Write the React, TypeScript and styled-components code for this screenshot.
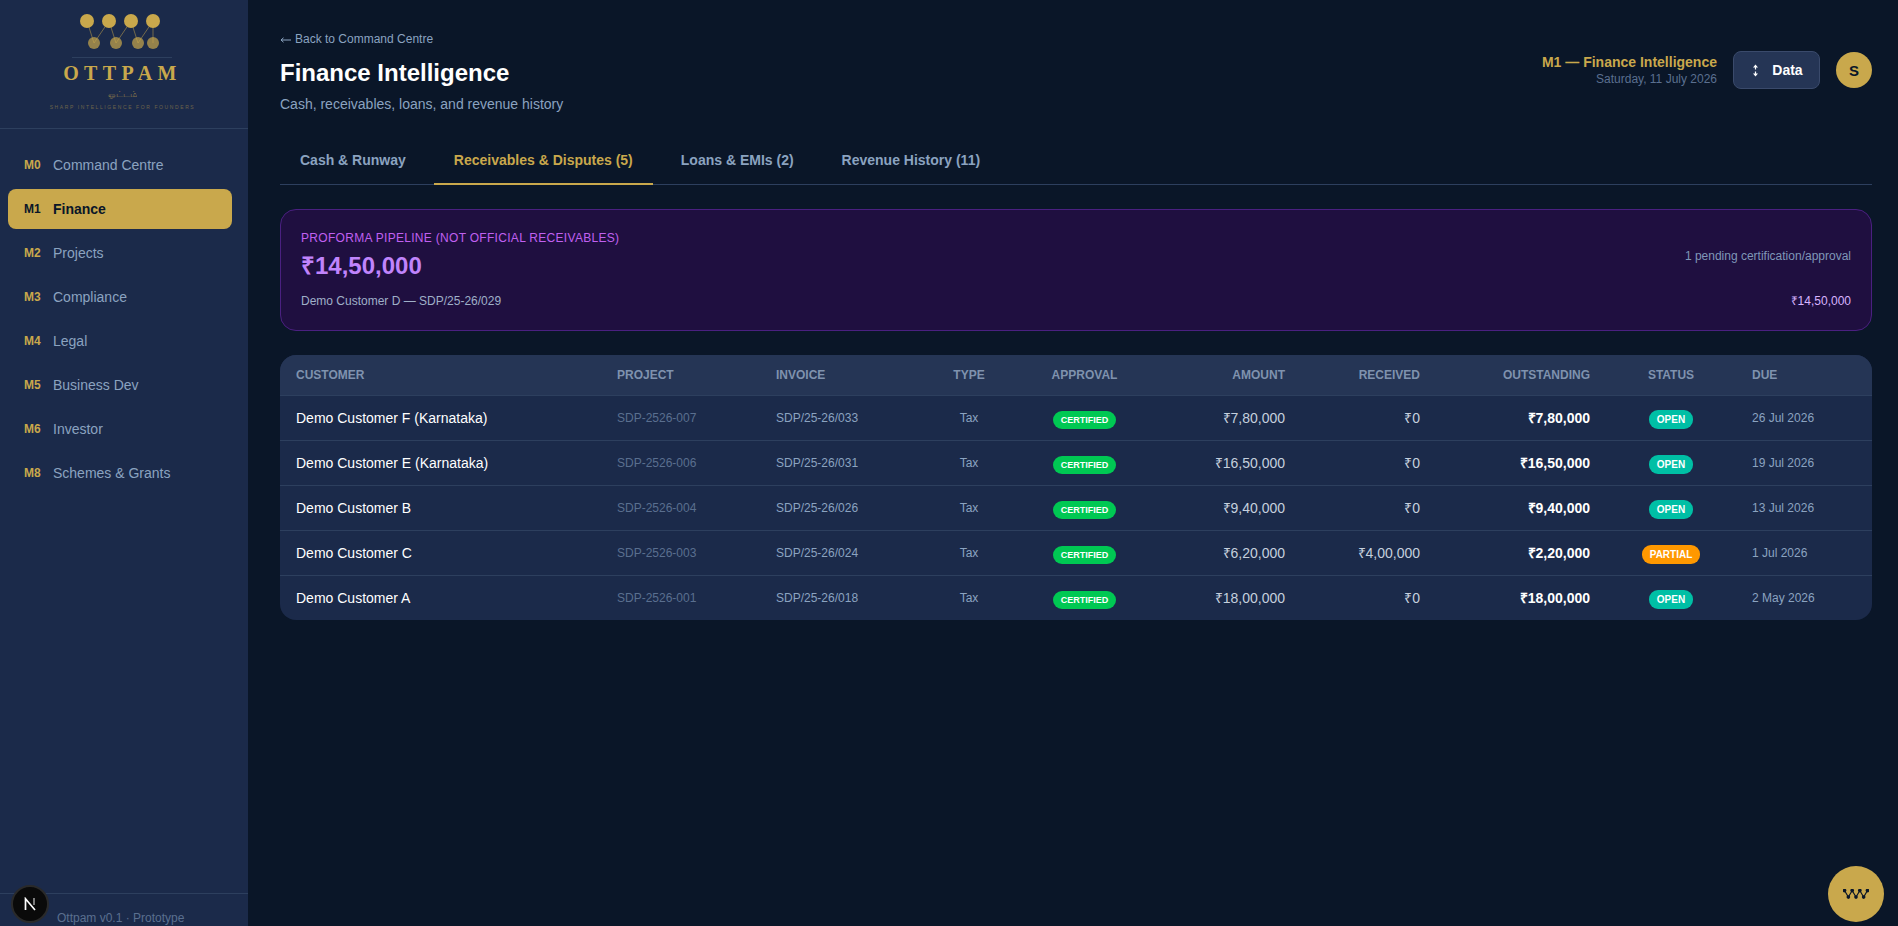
import React, { FC } from "react";
import styled, { createGlobalStyle } from "styled-components";

const GOLD = "#c9a84c";

const GlobalStyle = createGlobalStyle`
    html, body {
        margin: 0;
        height: 100%;
        overflow: hidden;
        background: #0a1628;
        font-family: "Liberation Sans", Arial, sans-serif;
    }
    * {
        box-sizing: border-box;
    }
`

//layout
const Shell = styled.div`
    display: flex;
    height: 926px;
    overflow: hidden;
`
const Sidebar = styled.aside`
    width: 248px;
    flex-shrink: 0;
    display: flex;
    flex-direction: column;
    background: #1b2a4a;
`
const Brand = styled.div`
    height: 129px;
    flex-shrink: 0;
    display: flex;
    flex-direction: column;
    align-items: center;
    padding-top: 13px;
    border-bottom: 1px solid #2d3f5e;
`
const BrandRule = styled.div`
    width: 100px;
    height: 1px;
    margin: 6px 4px 0 0;
    background: #2d3f5e;
`
const BrandName = styled.div`
    margin: 3px 3px 0 0;
    font-family: "Liberation Serif", serif;
    font-size: 20px;
    line-height: 24px;
    font-weight: 700;
    letter-spacing: 5.4px;
    color: ${GOLD};
`
const BrandTamil = styled.div`
    margin: 2px 4px 0 0;
    height: 14px;
    font-size: 9px;
    line-height: 14px;
    color: ${GOLD};
    opacity: 0.6;
`
const BrandTag = styled.div`
    margin: 2px 3px 0 0;
    font-size: 5px;
    line-height: 8px;
    letter-spacing: 1.6px;
    color: ${GOLD};
    opacity: 0.45;
    white-space: nowrap;
`
const Nav = styled.nav`
    flex: 1;
    display: flex;
    flex-direction: column;
    gap: 4px;
    padding: 16px 16px 0 8px;
`
const NavItem = styled.div<{ $active?: boolean }>`
    height: 40px;
    display: flex;
    align-items: center;
    padding-left: 16px;
    border-radius: 8px;
    font-size: 14px;
    font-weight: ${(p) => (p.$active ? 700 : 400)};
    background: ${(p) => (p.$active ? GOLD : "transparent")};
    color: ${(p) => (p.$active ? "#0a1628" : "#8ba3c0")};
`
const NavCode = styled.span<{ $active?: boolean }>`
    width: 29px;
    flex-shrink: 0;
    font-size: 12px;
    font-weight: 700;
    color: ${(p) => (p.$active ? "#0a1628" : GOLD)};
`
const SidebarFooter = styled.div`
    height: 33px;
    flex-shrink: 0;
    padding: 17px 0 0 57px;
    font-size: 12px;
    line-height: 14px;
    color: #5a6f8f;
    border-top: 1px solid #2d3f5e;
    white-space: nowrap;
`
const Main = styled.main`
    flex: 1;
    min-width: 0;
    padding: 31px 26px 0 32px;
`

//header
const Header = styled.header`
    display: flex;
    justify-content: space-between;
    align-items: flex-start;
    height: 85px;
`
const BackLink = styled.div`
    display: flex;
    align-items: center;
    gap: 4px;
    font-size: 12px;
    line-height: 16px;
    color: #8ba3c0;
`
const BackArrow = styled.svg`
    margin-top: 2px;
`
const Title = styled.h1`
    margin: 10px 0 0;
    font-size: 24px;
    line-height: 32px;
    font-weight: 700;
    color: #ffffff;
`
const Subtitle = styled.div`
    margin-top: 6px;
    font-size: 14px;
    line-height: 18px;
    color: #8ba3c0;
`
const HeaderRight = styled.div`
    display: flex;
    align-items: center;
    gap: 16px;
    margin-top: 20px;
`
const Context = styled.div`
    text-align: right;
`
const ContextTitle = styled.div`
    font-size: 14px;
    line-height: 16px;
    font-weight: 700;
    color: ${GOLD};
`
const ContextDate = styled.div`
    margin-top: 2px;
    font-size: 12px;
    line-height: 14px;
    color: #5a6f8f;
`
const DataButton = styled.button`
    width: 87px;
    height: 38px;
    display: flex;
    align-items: center;
    justify-content: center;
    gap: 13px;
    padding: 0 0 0 2px;
    border: 1px solid #3a4a6b;
    border-radius: 8px;
    background: #253555;
    color: #ffffff;
    font: 700 14px "Liberation Sans", Arial, sans-serif;
`
const Avatar = styled.div`
    width: 36px;
    height: 36px;
    display: flex;
    align-items: center;
    justify-content: center;
    border-radius: 50%;
    background: ${GOLD};
    color: #0a1628;
    font-size: 15px;
    font-weight: 700;
`

//tabs
const Tabs = styled.div`
    display: flex;
    gap: 8px;
    height: 49px;
    margin-top: 20px;
    border-bottom: 1px solid #2d3f5e;
`
const Tab = styled.div<{ $active?: boolean }>`
    height: 49px;
    padding: 0 20px;
    display: flex;
    align-items: center;
    font-size: 14px;
    font-weight: 700;
    color: ${(p) => (p.$active ? GOLD : "#8ba3c0")};
    border-bottom: 2px solid ${(p) => (p.$active ? GOLD : "transparent")};
`

//proforma card
const PipelineCard = styled.section`
    height: 122px;
    margin-top: 24px;
    padding: 20px;
    border: 1px solid #4a2080;
    border-radius: 16px;
    background: #1f0f40;
`
const PipelineTop = styled.div`
    display: flex;
    justify-content: space-between;
    align-items: center;
`
const PipelineLabel = styled.div`
    font-size: 12px;
    line-height: 16px;
    letter-spacing: 0.3px;
    color: #c060f0;
`
const PipelineValue = styled.div`
    margin-top: 4px;
    font-size: 24px;
    line-height: 32px;
    font-weight: 700;
    color: #c084fc;
`
const PipelineNote = styled.div`
    font-size: 12px;
    color: #7f97b8;
`
const PipelineRow = styled.div`
    display: flex;
    justify-content: space-between;
    margin-top: 11px;
    font-size: 12px;
    line-height: 16px;
    color: #9fb0c8;
`
const PipelineAmount = styled.span`
    color: #d8b4fe;
`

//table
const TableWrap = styled.div`
    margin-top: 24px;
    border-radius: 16px;
    overflow: hidden;
    background: #1b2a4a;
`
const Table = styled.table`
    width: 100%;
    table-layout: fixed;
    border-collapse: collapse;
`
const HeadRow = styled.tr`
    height: 40px;
    background: #253555;
    border-bottom: 1px solid #2d3f5e;
`
const Th = styled.th<{ $align?: string }>`
    padding: 0 16px;
    font-size: 12px;
    font-weight: 700;
    text-transform: uppercase;
    text-align: ${(p) => p.$align || "left"};
    color: #7f92ae;
`
const Row = styled.tr`
    height: 45px;
    border-bottom: 1px solid #2d3f5e;
    &:last-child {
        border-bottom: none;
    }
`
const Td = styled.td<{ $align?: string; $size?: number; $color?: string; $bold?: boolean }>`
    padding: 0 16px;
    font-size: ${(p) => p.$size || 13}px;
    font-weight: ${(p) => (p.$bold ? 700 : 400)};
    text-align: ${(p) => p.$align || "left"};
    color: ${(p) => p.$color || "#8ba3c0"};
    white-space: nowrap;
`
const Badge = styled.span<{ $bg: string; $size: number; $drop: number }>`
    display: inline-block;
    height: ${(p) => p.$size + 9}px;
    margin-top: ${(p) => p.$drop}px;
    padding: 0 8px;
    border-radius: 9px;
    background: ${(p) => p.$bg};
    color: #ffffff;
    font-size: ${(p) => p.$size}px;
    line-height: ${(p) => p.$size + 9}px;
    font-weight: 700;
    vertical-align: middle;
`

//overlays
const NextBadge = styled.div`
    position: fixed;
    left: 11px;
    top: 885px;
    width: 38px;
    height: 38px;
    display: flex;
    align-items: center;
    justify-content: center;
    border-radius: 50%;
    background: #0a0a0a;
    border: 2px solid #2a2a2a;
`
const Fab = styled.div`
    position: fixed;
    left: 1828px;
    top: 866px;
    width: 56px;
    height: 56px;
    display: flex;
    align-items: center;
    justify-content: center;
    border-radius: 50%;
    background: ${GOLD};
`

const NAV = [
    ["M0", "Command Centre"],
    ["M1", "Finance"],
    ["M2", "Projects"],
    ["M3", "Compliance"],
    ["M4", "Legal"],
    ["M5", "Business Dev"],
    ["M6", "Investor"],
    ["M8", "Schemes & Grants"],
];

const TABS = ["Cash & Runway", "Receivables & Disputes (5)", "Loans & EMIs (2)", "Revenue History (11)"];

const COLS: [string, number, string][] = [
    ["Customer", 321, "left"],
    ["Project", 159, "left"],
    ["Invoice", 169, "left"],
    ["Type", 80, "center"],
    ["Approval", 151, "center"],
    ["Amount", 141, "right"],
    ["Received", 135, "right"],
    ["Outstanding", 170, "right"],
    ["Status", 130, "center"],
    ["Due", 136, "left"],
];

const ROWS = [
    { customer: "Demo Customer F (Karnataka)", project: "SDP-2526-007", invoice: "SDP/25-26/033", amount: "₹7,80,000", received: "₹0", outstanding: "₹7,80,000", status: "OPEN", due: "26 Jul 2026" },
    { customer: "Demo Customer E (Karnataka)", project: "SDP-2526-006", invoice: "SDP/25-26/031", amount: "₹16,50,000", received: "₹0", outstanding: "₹16,50,000", status: "OPEN", due: "19 Jul 2026" },
    { customer: "Demo Customer B", project: "SDP-2526-004", invoice: "SDP/25-26/026", amount: "₹9,40,000", received: "₹0", outstanding: "₹9,40,000", status: "OPEN", due: "13 Jul 2026" },
    { customer: "Demo Customer C", project: "SDP-2526-003", invoice: "SDP/25-26/024", amount: "₹6,20,000", received: "₹4,00,000", outstanding: "₹2,20,000", status: "PARTIAL", due: "1 Jul 2026" },
    { customer: "Demo Customer A", project: "SDP-2526-001", invoice: "SDP/25-26/018", amount: "₹18,00,000", received: "₹0", outstanding: "₹18,00,000", status: "OPEN", due: "2 May 2026" },
];

const LogoMark: FC = () => {
    const top = [19, 41, 63, 85];
    const bottom = [26, 48, 70, 85];
    return (
        <svg width="112" height="38" viewBox="0 0 112 38">
            <g stroke={GOLD} strokeOpacity="0.5" strokeWidth="1">
                {top.map((x, i) => <line key={i} x1={x} y1={8} x2={bottom[i]} y2={30} />)}
                {bottom.slice(0, 3).map((x, i) => <line key={i} x1={x} y1={30} x2={top[i + 1]} y2={8} />)}
            </g>
            <g fill={GOLD}>
                {top.map((x) => <circle key={x} cx={x} cy={8} r="7" />)}
            </g>
            <g fill={GOLD} fillOpacity="0.7">
                {bottom.map((x) => <circle key={x} cx={x} cy={30} r="6" />)}
            </g>
        </svg>
    );
}

const FabMark: FC = () => {
    const pts = [[2, 2], [7, 10.5], [12, 2], [17, 10.5], [22, 2], [27, 10.5], [32, 2]];
    return (
        <svg width="26" height="10" viewBox="0 0 34 13">
            <polyline points={pts.map((p) => p.join(",")).join(" ")} fill="none" stroke="#0a1628" strokeWidth="1.5" />
            {pts.map((p, i) => <circle key={i} cx={p[0]} cy={p[1]} r="2.4" fill="#0a1628" />)}
        </svg>
    );
}

const App: FC = () => {
    return (
        <Shell>
            <GlobalStyle />
            <Sidebar>
                <Brand>
                    <LogoMark />
                    <BrandRule />
                    <BrandName>OTTPAM</BrandName>
                    <BrandTamil>ஓட்டம்</BrandTamil>
                    <BrandTag>SHARP INTELLIGENCE FOR FOUNDERS</BrandTag>
                </Brand>
                <Nav>
                    {NAV.map(([code, label]) => (
                        <NavItem key={code} $active={code === "M1"}>
                            <NavCode $active={code === "M1"}>{code}</NavCode>
                            {label}
                        </NavItem>
                    ))}
                </Nav>
                <SidebarFooter>Ottpam v0.1 · Prototype</SidebarFooter>
            </Sidebar>
            <Main>
                <Header>
                    <div>
                        <BackLink>
                            <BackArrow width="11" height="6" viewBox="0 0 11 6" fill="none" stroke="#8ba3c0" strokeWidth="1">
                                <path d="M11 3H1M3.5 .8 1 3l2.5 2.2" />
                            </BackArrow>
                            Back to Command Centre
                        </BackLink>
                        <Title>Finance Intelligence</Title>
                        <Subtitle>Cash, receivables, loans, and revenue history</Subtitle>
                    </div>
                    <HeaderRight>
                        <Context>
                            <ContextTitle>M1 — Finance Intelligence</ContextTitle>
                            <ContextDate>Saturday, 11 July 2026</ContextDate>
                        </Context>
                        <DataButton>
                            <svg width="7" height="13" viewBox="0 0 7 13" fill="#ffffff">
                                <path d="M3.5 .5 6 3.6H4.1V5.6H2.9V3.6H1ZM3.5 12.5 6 9.4H4.1V7.4H2.9V9.4H1Z" />
                            </svg>
                            Data
                        </DataButton>
                        <Avatar>S</Avatar>
                    </HeaderRight>
                </Header>
                <Tabs>
                    {TABS.map((t, i) => <Tab key={t} $active={i === 1}>{t}</Tab>)}
                </Tabs>
                <PipelineCard>
                    <PipelineTop>
                        <div>
                            <PipelineLabel>PROFORMA PIPELINE (NOT OFFICIAL RECEIVABLES)</PipelineLabel>
                            <PipelineValue>₹14,50,000</PipelineValue>
                        </div>
                        <PipelineNote>1 pending certification/approval</PipelineNote>
                    </PipelineTop>
                    <PipelineRow>
                        <span>Demo Customer D — SDP/25-26/029</span>
                        <PipelineAmount>₹14,50,000</PipelineAmount>
                    </PipelineRow>
                </PipelineCard>
                <TableWrap>
                    <Table>
                        <colgroup>
                            {COLS.map(([name, width]) => <col key={name} width={width} />)}
                        </colgroup>
                        <thead>
                            <HeadRow>
                                {COLS.map(([name, , align]) => <Th key={name} $align={align}>{name}</Th>)}
                            </HeadRow>
                        </thead>
                        <tbody>
                            {ROWS.map((r) => (
                                <Row key={r.project}>
                                    <Td $size={14} $color="#ffffff">{r.customer}</Td>
                                    <Td $size={12} $color="#5a6f8f">{r.project}</Td>
                                    <Td $size={12}>{r.invoice}</Td>
                                    <Td $size={12} $align="center">Tax</Td>
                                    <Td $align="center"><Badge $bg="#00c853" $size={9} $drop={5}>CERTIFIED</Badge></Td>
                                    <Td $size={14} $align="right" $color="#c5d0de">{r.amount}</Td>
                                    <Td $size={14} $align="right" $color="#c5d0de">{r.received}</Td>
                                    <Td $size={14} $align="right" $color="#ffffff" $bold>{r.outstanding}</Td>
                                    <Td $align="center">
                                        <Badge $bg={r.status === "PARTIAL" ? "#ff9800" : "#00bfa5"} $size={10} $drop={3}>{r.status}</Badge>
                                    </Td>
                                    <Td $size={12}>{r.due}</Td>
                                </Row>
                            ))}
                        </tbody>
                    </Table>
                </TableWrap>
            </Main>
            <NextBadge>
                <svg width="14" height="14" viewBox="0 0 14 14" fill="none" stroke="#ffffff" strokeWidth="1.7">
                    <path d="M2.5 13V1.8L12 13" />
                    <path d="M11 1v7" strokeOpacity="0.55" />
                </svg>
            </NextBadge>
            <Fab><FabMark /></Fab>
        </Shell>
    );
}

export default App;
